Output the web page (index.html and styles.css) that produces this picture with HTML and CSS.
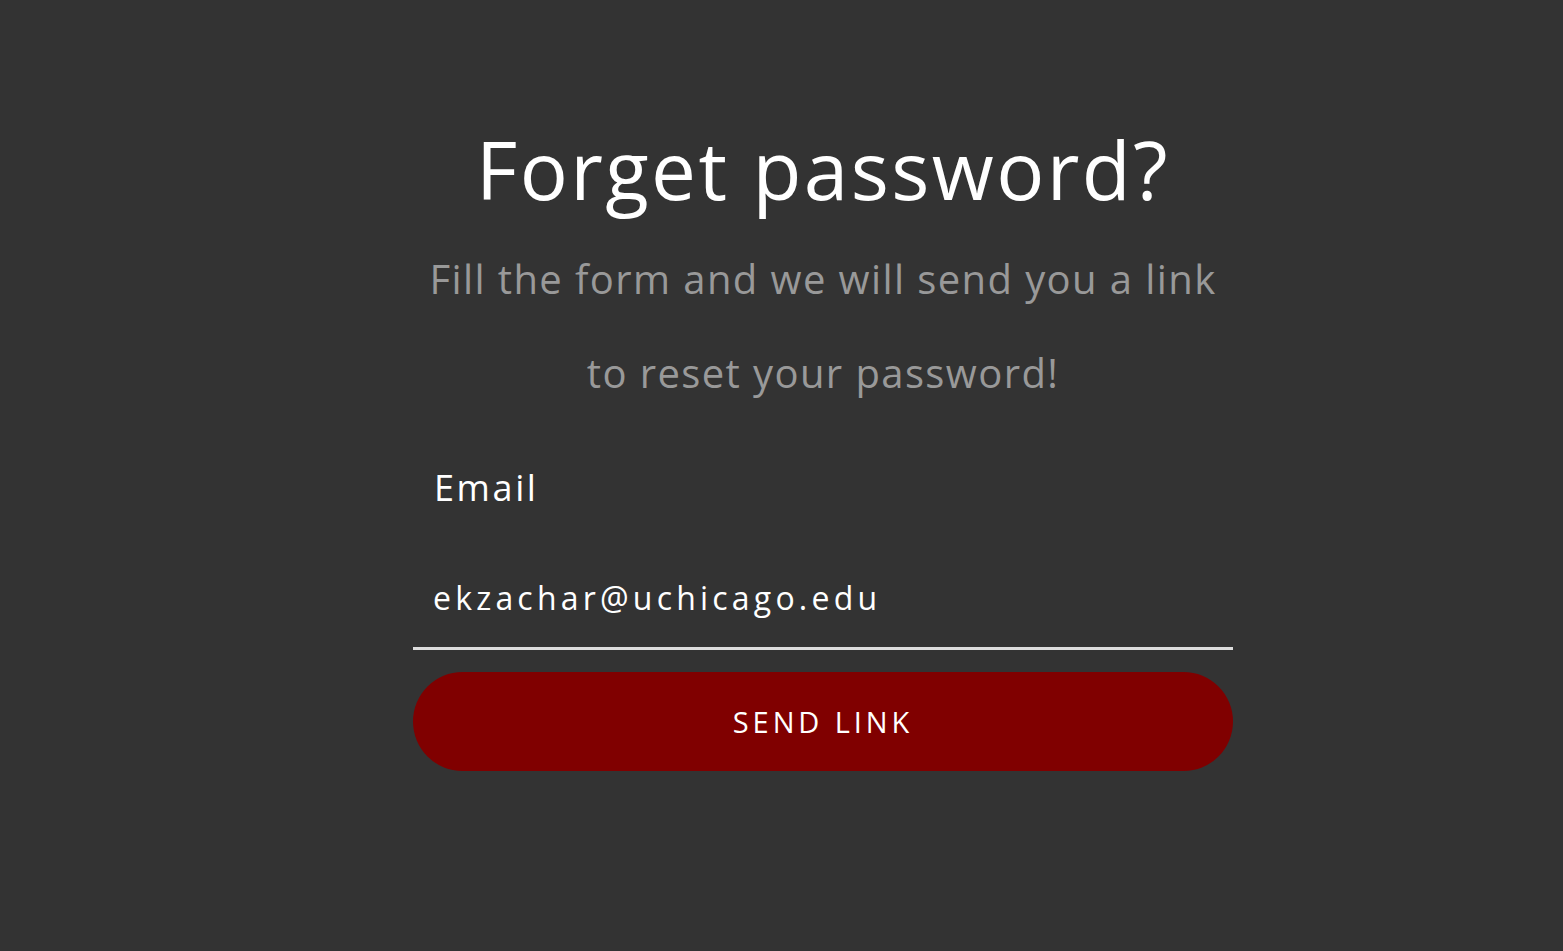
FILE: index.html
```html
<!DOCTYPE html>
<html lang="en">
<head>
<meta charset="utf-8">
<title>Forget password?</title>
<link rel="stylesheet" href="styles.css">
</head>
<body>
<main class="page">
  <section class="card">
    <h1 class="title">Forget password?</h1>
    <p class="subtitle">Fill the form and we will send you a link<br>to reset your password!</p>
    <form class="form">
      <label class="label" for="email">Email</label>
      <input class="input" id="email" type="email" value="ekzachar@uchicago.edu">
      <button class="button" type="button">Send link</button>
    </form>
  </section>
</main>
</body>
</html>
```
FILE: styles.css
```css
html, body {
  margin: 0;
  padding: 0;
  background: #333333;
  height: 100%;
}

body {
  font-family: "Open Sans", "Liberation Sans", sans-serif;
  color: #ffffff;
}

.page {
  display: flex;
  justify-content: center;
  padding: 129px 0 0 83px;
  box-sizing: border-box;
  min-height: 100%;
}

.card {
  width: 820px;
  display: flex;
  flex-direction: column;
}

.title {
  margin: 0;
  font-size: 80px;
  font-weight: 400;
  line-height: 1;
  letter-spacing: 2.4px;
  text-align: center;
  color: #ffffff;
}

.subtitle {
  margin: 23px 0 0;
  font-size: 40px;
  line-height: 94px;
  letter-spacing: 1.4px;
  text-align: center;
  color: #999999;
}

.form {
  display: flex;
  flex-direction: column;
  margin-top: 50px;
}

.label {
  padding-left: 21px;
  font-size: 36px;
  line-height: 1;
  letter-spacing: 2.6px;
  color: #ffffff;
}

.input {
  margin-top: 42px;
  height: 102px;
  box-sizing: border-box;
  padding: 0 20px;
  border: none;
  border-bottom: 3px solid #dddddd;
  background: transparent;
  color: #ffffff;
  font-family: "Open Sans", "Liberation Sans", sans-serif;
  font-size: 32px;
  letter-spacing: 4.2px;
  outline: none;
}

.button {
  margin-top: 22px;
  height: 99px;
  border: none;
  border-radius: 50px;
  background: #800000;
  color: #ffffff;
  font-family: "Open Sans", "Liberation Sans", sans-serif;
  font-size: 29px;
  letter-spacing: 3.9px;
  text-transform: uppercase;
  cursor: pointer;
}
```
